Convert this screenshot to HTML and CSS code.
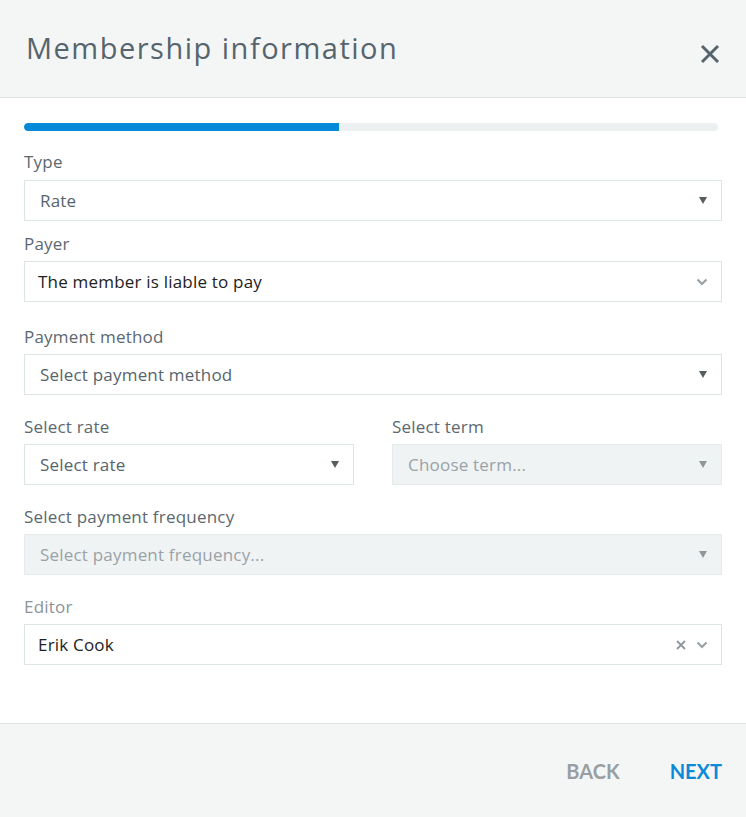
FILE: index.html
```html
<!DOCTYPE html>
<html>
<head>
<meta charset="utf-8">
<link rel="stylesheet" href="styles.css">
</head>
<body>
<div class="modal">
  <header class="head">
    <h1 class="title">Membership information</h1>
    <button class="close" aria-label="Close">
      <svg width="20" height="20" viewBox="0 0 20 20"><path d="M2 2 L18 18 M18 2 L2 18" stroke="#56646d" stroke-width="3" stroke-linecap="butt"/></svg>
    </button>
  </header>
  <main class="body">
    <div class="progress"><div class="progress-fill" style="width:315px"></div></div>

    <div class="field f-type">
      <label class="label">Type</label>
      <div class="select"><span class="val muted">Rate</span><span class="tri"></span></div>
    </div>

    <div class="field f-payer">
      <label class="label">Payer</label>
      <div class="select rs"><span class="val dark">The member is liable to pay</span>
        <svg class="chev" width="12" height="8" viewBox="0 0 12 8"><path d="M1.5 1.5 L6 6 L10.5 1.5" fill="none" stroke="#9aa1a5" stroke-width="2.2"/></svg>
      </div>
    </div>

    <div class="field f-pm">
      <label class="label">Payment method</label>
      <div class="select"><span class="val muted">Select payment method</span><span class="tri"></span></div>
    </div>

    <div class="row">
      <div class="field">
        <label class="label">Select rate</label>
        <div class="select"><span class="val muted">Select rate</span><span class="tri"></span></div>
      </div>
      <div class="field">
        <label class="label">Select term</label>
        <div class="select disabled"><span class="val faint">Choose term...</span><span class="tri light"></span></div>
      </div>
    </div>

    <div class="field f-freq">
      <label class="label">Select payment frequency</label>
      <div class="select disabled"><span class="val faint">Select payment frequency...</span><span class="tri light"></span></div>
    </div>

    <div class="field f-editor">
      <label class="label lite">Editor</label>
      <div class="select rs"><span class="val dark">Erik Cook</span>
        <svg class="x" width="10" height="10" viewBox="0 0 10 10"><path d="M1 1 L9 9 M9 1 L1 9" stroke="#8f979b" stroke-width="1.8"/></svg>
        <svg class="chev" width="12" height="8" viewBox="0 0 12 8"><path d="M1.5 1.5 L6 6 L10.5 1.5" fill="none" stroke="#9aa1a5" stroke-width="2.2"/></svg>
      </div>
    </div>
  </main>
  <footer class="foot">
    <button class="btn back">BACK</button>
    <button class="btn next">NEXT</button>
  </footer>
</div>
</body>
</html>
```
FILE: styles.css
```css
* { box-sizing: border-box; }
html, body { margin: 0; padding: 0; background: #fff; }
body { font-family: "Open Sans", "Lato", sans-serif; width: 746px; height: 817px; overflow: hidden; }
.modal { display: flex; flex-direction: column; height: 817px; }

.head {
  height: 98px;
  flex: none;
  background: #f4f6f6;
  border-bottom: 1px solid #dfe3e4;
  display: flex;
  align-items: center;
  justify-content: space-between;
  padding: 0 26px 0 26px;
}
.title {
  margin: 0;
  font-family: "Open Sans", sans-serif;
  font-weight: 400;
  font-size: 29px;
  color: #56646d;
  letter-spacing: 1.5px;
  position: relative;
  top: -1px;
}
.close { background: none; border: 0; padding: 0; width: 20px; height: 20px; margin-top: 10px; cursor: pointer; display: flex; }

.body { flex: 1; padding: 25px 24px 0 24px; }

.progress { height: 8px; width: 694px; background: #edf0f1; border-radius: 4px; overflow: hidden; }
.progress-fill { height: 100%; background: #0289d8; border-radius: 4px 0 0 4px; }

.field { display: flex; flex-direction: column; }
.label {
  font-size: 17px;
  letter-spacing: 0.2px;
  line-height: 20px;
  color: #5b6870;
  margin-bottom: 7px;
}
.label.lite { color: #8c9397; }

.f-type { margin-top: 21px; }
.f-type .label { margin-bottom: 8px; }
.f-payer { margin-top: 13px; }
.f-pm { margin-top: 25px; }
.row { display: grid; grid-template-columns: 330px 330px; column-gap: 38px; margin-top: 22px; }
.f-freq { margin-top: 22px; }
.f-editor { margin-top: 22px; }

.select {
  height: 41px;
  border: 1px solid #dde4e4;
  background: #fff;
  display: flex;
  align-items: center;
  padding: 0 14px 0 15px;
  font-size: 17px;
  letter-spacing: 0.2px;
}
.select.rs { padding-left: 13px; padding-right: 13px; }
.select.disabled { background: #f0f3f4; border-color: #e6eaeb; }
.val { flex: 1; white-space: nowrap; }
.val.muted { color: #56646d; }
.val.dark { color: #222; }
.val.faint { color: #99a2a7; }

.tri {
  width: 0; height: 0;
  border-left: 4px solid transparent;
  border-right: 4px solid transparent;
  border-top: 7px solid #555d61;
}
.tri.light { border-top-color: #8e979b; }
.x { margin-right: 10px; }

.foot {
  height: 94px;
  flex: none;
  background: #f4f6f6;
  border-top: 1px solid #dfe3e4;
  display: flex;
  justify-content: flex-end;
  align-items: center;
  padding: 0 24px 0 0;
  gap: 50px;
}
.btn {
  background: none;
  border: 0;
  padding: 0;
  font-family: "Lato", sans-serif;
  font-weight: 700;
  font-size: 20px;
  cursor: pointer;
  margin-top: 0;
}
.back { color: #989fa3; }
.next { color: #0a8ad8; }
```
